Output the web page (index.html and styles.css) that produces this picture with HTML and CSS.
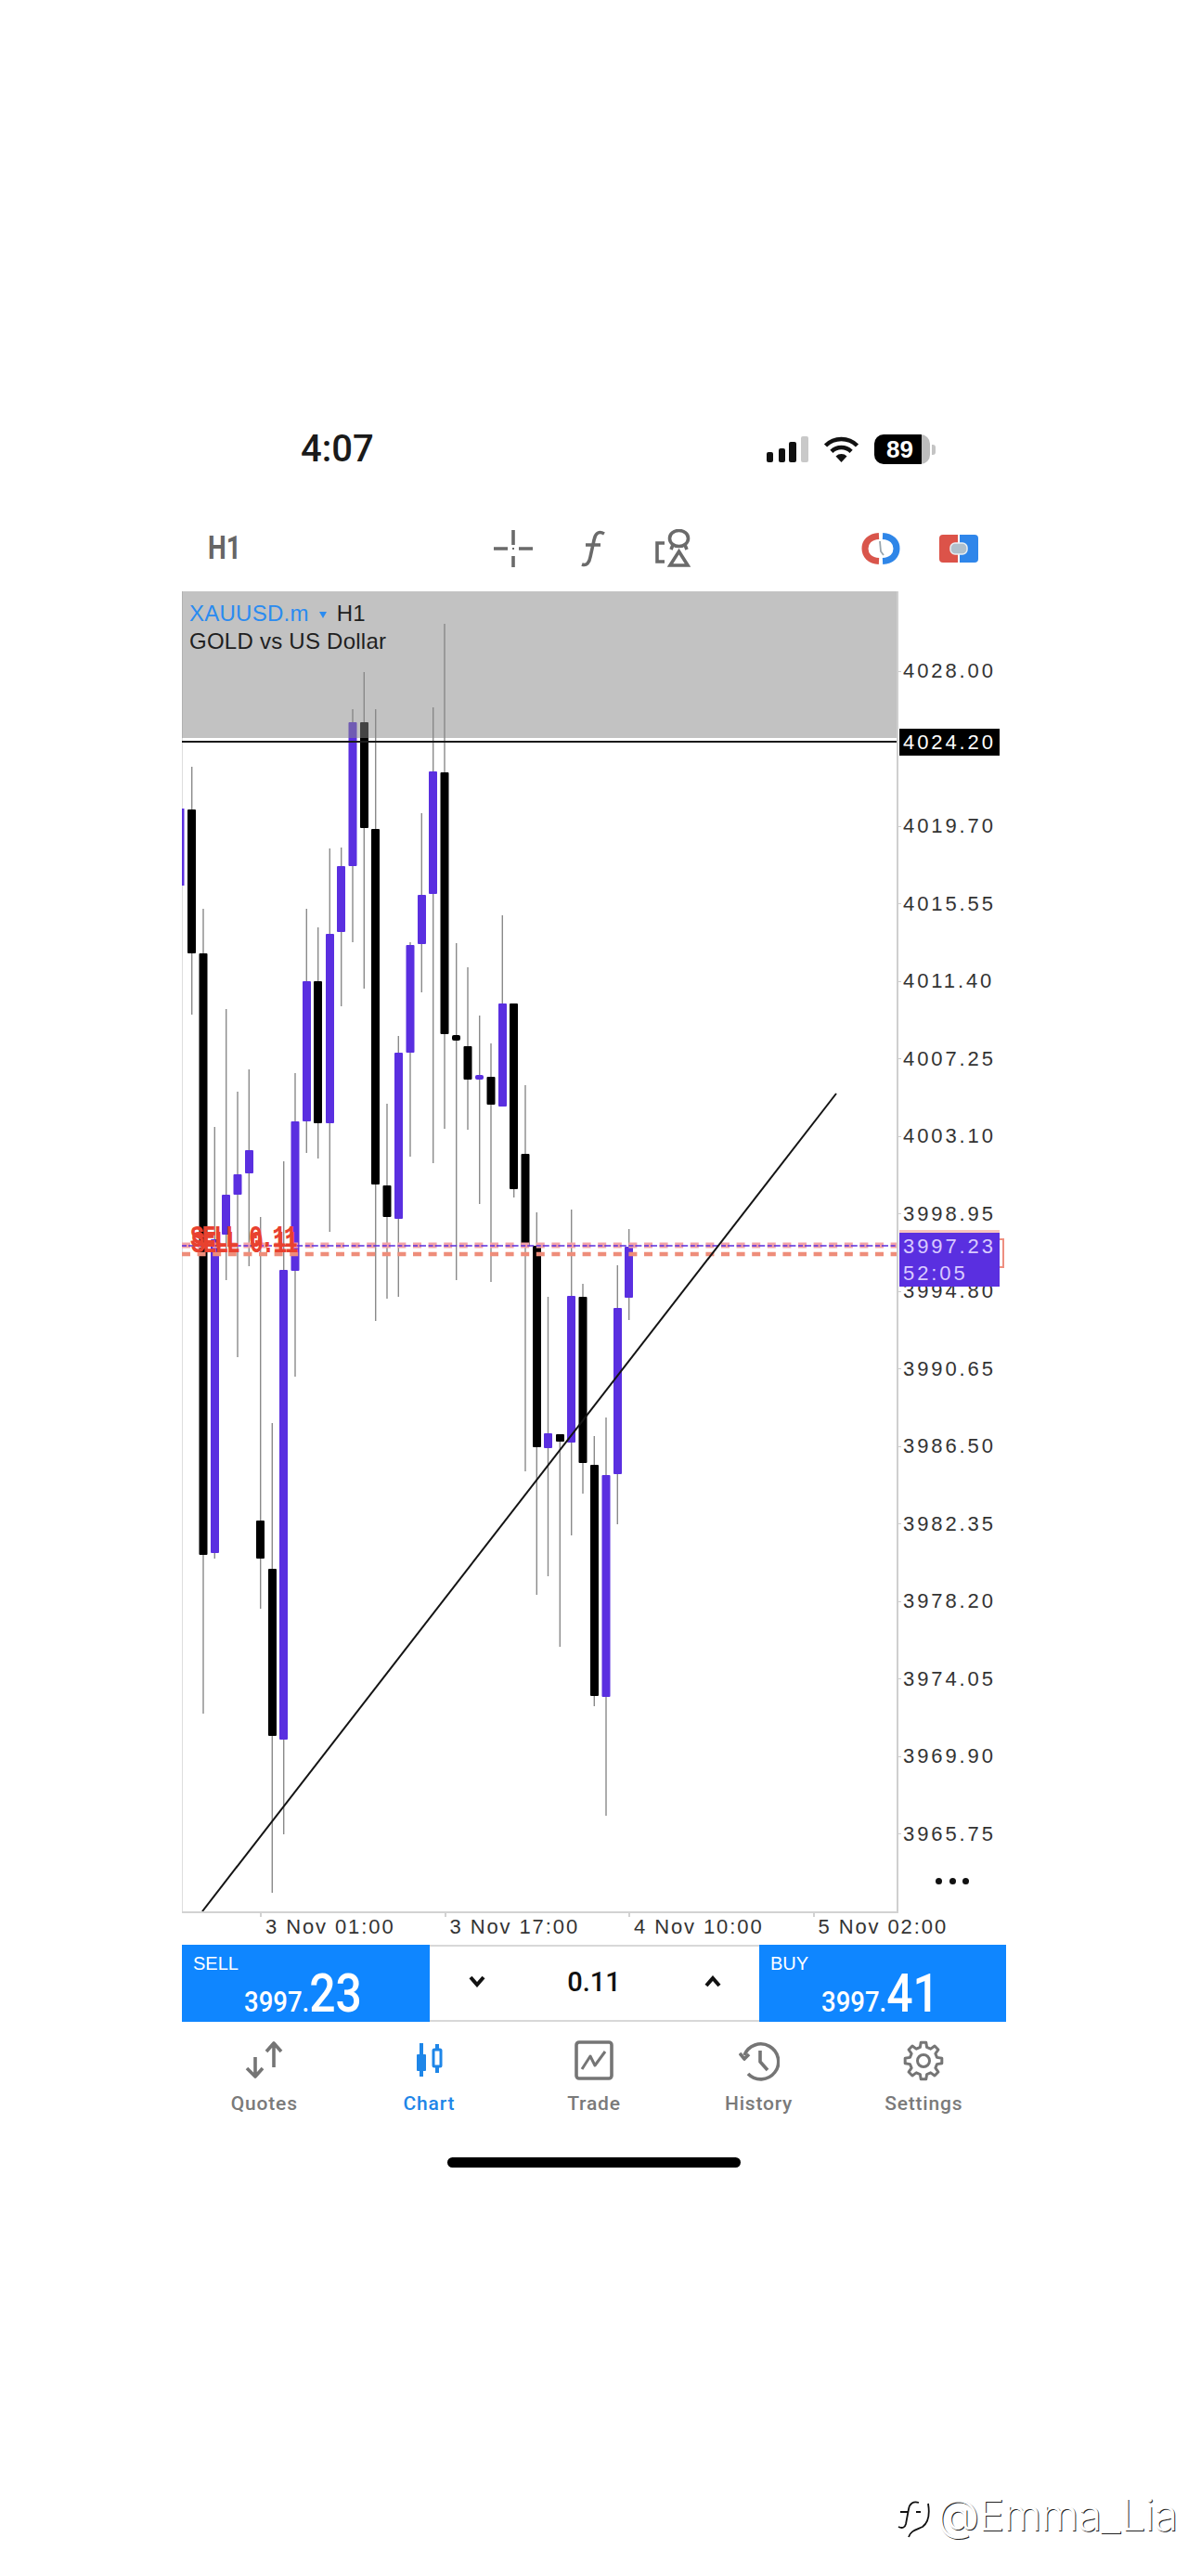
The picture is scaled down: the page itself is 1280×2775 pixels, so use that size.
FILE: index.html
```html
<!DOCTYPE html>
<html lang="en">
<head>
<meta charset="utf-8">
<title>XAUUSD.m H1</title>
<link rel="stylesheet" href="styles.css">
</head>
<body>
<main class="screen">
  <header class="status">
    <span class="time">4:07</span>
    <div class="status-icons">
      <svg class="signal" width="45" height="28" viewBox="0 0 45 28"><rect x="0" y="17" width="7" height="11" rx="2"/><rect x="13" y="13" width="7" height="15" rx="2"/><rect x="24" y="6" width="8" height="22" rx="2"/><rect class="signal-off" x="37" y="0" width="8" height="28" rx="2"/></svg>
      <svg class="wifi" width="41" height="29" viewBox="0 0 41 29"><path class="wifi-arc" d="M3.5 10A24 24 0 0 1 37.500 10"/><path class="wifi-arc" d="M9.900 16.400A15 15 0 0 1 31.100 16.400"/><path d="M14.500 21.500L20.500 28L26.500 21.500A8.500 8.500 0 0 0 14.500 21.500Z"/></svg>
      <div class="battery-wrap"><span class="battery">89</span><span class="battery-tip"></span></div>
    </div>
  </header>

  <nav class="toolbar">
    <span class="period">H1</span>
    <div class="tools">
      <svg width="44" height="42" viewBox="0 0 44 42" class="tool"><path d="M22 1V17M22 29V41M1 21H16M28 21H43"/><path class="tool-thin" d="M22 20V22"/></svg>
      <svg width="44" height="42" viewBox="0 0 44 42" class="tool"><path d="M34 5C27 1 24 6 23 12L19 30C18 36 15 40 10 38M14 17H30"/></svg>
      <svg width="44" height="42" viewBox="0 0 44 42" class="tool"><ellipse cx="28.500" cy="10" rx="10" ry="8.500"/><path d="M22 17L20 22M35 17L37 22M28.500 24L38 39H19ZM13 15H5V35H13"/></svg>
    </div>
    <div class="apps">
      <svg width="42" height="34" viewBox="0 0 42 34"><path class="clock-red" d="M19 3.500C9 4 4 10 4 17S9 30 19 30.500"/><path class="clock-blue" d="M23 3.500C33 4 38 10 38 17S33 30 23 30.500"/><path class="clock-hand" d="M20 9L21 20L24 24"/></svg>
      <svg width="42" height="30" viewBox="0 0 42 30"><path class="split-red" d="M20 0H4Q0 0 0 4V26Q0 30 4 30H20Z"/><path class="split-blue" d="M22 0H38Q42 0 42 4V26Q42 30 38 30H22Z"/><rect class="split-core" x="12" y="9" width="18" height="12" rx="5"/></svg>
    </div>
  </nav>

  <section class="chart">
    <div class="plot">
      <svg class="plot-svg" width="770" height="1422" viewBox="196 637 770 1422">
        <path class="wicks" d="M206.700 826V1093M219 979V1846M231.300 1214V1679M243.700 1087V1379M256 1176V1462M268.300 1152V1364M280.700 1311V1733M293.300 1533V2039M305.700 1251V1976M318 1156V1483M330.300 979V1242M342.700 999V1248M355.300 914V1327M367.700 913V1084M380 764V1015M392.300 724V1065M404.700 764V1423M417 1189V1399M429.300 1116V1397M442 1015V1246M454.300 876V1069M466.700 762V1253M479 672V1216M491.700 1016V1379M504 1042V1217M516.700 1094V1297M529 1124V1381M541.300 986V1192M553.700 1081V1290M566 1169V1585M578.300 1306V1718M590.500 1397V1698M603.300 1545V1774M615.700 1303V1654M628 1383V1609M640.300 1547V1838M653 1527V1956M665.300 1363V1642M677.700 1324V1422"/>
        <g class="up">
          <rect x="196" y="871" width="2.500" height="83"/>
          <rect x="227" y="1335" width="9" height="338" rx="1"/>
          <rect x="239" y="1287" width="9" height="43" rx="1"/>
          <rect x="251.500" y="1265" width="9" height="22" rx="1"/>
          <rect x="264" y="1239" width="9" height="25" rx="1"/>
          <rect x="301" y="1368" width="9" height="506" rx="1"/>
          <rect x="313.500" y="1208" width="9" height="161" rx="1"/>
          <rect x="326" y="1057" width="9" height="151" rx="1"/>
          <rect x="351" y="1006" width="9" height="204" rx="1"/>
          <rect x="363" y="933" width="9" height="71" rx="1"/>
          <rect x="375.500" y="778" width="9" height="155" rx="1"/>
          <rect x="425" y="1134" width="9" height="179" rx="1"/>
          <rect x="437.500" y="1018" width="9" height="116" rx="1"/>
          <rect x="450" y="964" width="9" height="53" rx="1"/>
          <rect x="462" y="831" width="9" height="132" rx="1"/>
          <rect x="512" y="1158" width="9" height="5" rx="2"/>
          <rect x="537" y="1081" width="9" height="111" rx="1"/>
          <rect x="586" y="1544" width="9" height="16" rx="1"/>
          <rect x="611" y="1396" width="9" height="158" rx="1"/>
          <rect x="648.500" y="1589" width="9" height="239" rx="1"/>
          <rect x="661" y="1409" width="9" height="179" rx="1"/>
          <rect x="673" y="1343" width="9" height="55" rx="1"/>
        </g>
        <g class="down">
          <rect x="202" y="872" width="9" height="155" rx="1"/>
          <rect x="214.500" y="1027" width="9" height="648" rx="1"/>
          <rect x="276" y="1638" width="9" height="41" rx="1"/>
          <rect x="289" y="1690" width="9" height="180" rx="1"/>
          <rect x="338" y="1057" width="9" height="153" rx="1"/>
          <rect x="388" y="778" width="9" height="114" rx="1"/>
          <rect x="400" y="893" width="9" height="383" rx="1"/>
          <rect x="412.500" y="1277" width="9" height="34" rx="1"/>
          <rect x="474.500" y="832" width="9" height="282" rx="1"/>
          <rect x="487" y="1115" width="9" height="6" rx="2"/>
          <rect x="499.500" y="1127" width="9" height="36" rx="1"/>
          <rect x="524.500" y="1160" width="9" height="30" rx="1"/>
          <rect x="549" y="1081" width="9" height="200" rx="1"/>
          <rect x="561.500" y="1243" width="9" height="100" rx="1"/>
          <rect x="574" y="1342" width="9" height="217" rx="1"/>
          <rect x="599" y="1545" width="9" height="8" rx="1"/>
          <rect x="623.500" y="1397" width="9" height="179" rx="1"/>
          <rect x="636" y="1578" width="9" height="249" rx="1"/>
        </g>
        <rect class="shade" x="196" y="637" width="770" height="158"/>
        <path class="stop-line" d="M196 799H966"/>
        <path class="ask-dash" d="M196 1341.500H966"/>
        <path class="ask-line" d="M196 1342H966"/>
        <path class="sell-dash" d="M196 1351H966"/>
        <path class="trend" d="M218 2059L901 1178"/>
      </svg>
      <div class="legend">
        <div class="legend-row"><span class="symbol">XAUUSD.m</span><span class="caret"></span><span>H1</span></div>
        <div>GOLD vs US Dollar</div>
      </div>
      <span class="sell-tag">SELL 0.11</span>
    </div>
    <div class="axis">
      <span class="price">4028.00</span>
      <span class="price price-blank"></span>
      <span class="price">4019.70</span>
      <span class="price">4015.55</span>
      <span class="price">4011.40</span>
      <span class="price">4007.25</span>
      <span class="price">4003.10</span>
      <span class="price">3998.95</span>
      <span class="price">3994.80</span>
      <span class="price">3990.65</span>
      <span class="price">3986.50</span>
      <span class="price">3982.35</span>
      <span class="price">3978.20</span>
      <span class="price">3974.05</span>
      <span class="price">3969.90</span>
      <span class="price">3965.75</span>
      <span class="tag tag-stop">4024.20</span>
      <span class="bracket"></span>
      <span class="tag tag-ask">3997.23<br>52:05</span>
      <span class="more"><i></i><i></i><i></i></span>
    </div>
    <div class="times">
      <span class="stamp">3 Nov 01:00</span>
      <span class="stamp">3 Nov 17:00</span>
      <span class="stamp">4 Nov 10:00</span>
      <span class="stamp">5 Nov 02:00</span>
    </div>
  </section>

  <section class="trade">
    <div class="quote">
      <span class="quote-label">SELL</span>
      <span class="quote-price"><span class="quote-small">3997.</span><span class="quote-big">23</span></span>
    </div>
    <div class="volume">
      <svg width="18" height="13" viewBox="0 0 18 13" class="chev"><path d="M2 2L9 10L16 2"/></svg>
      <span class="lot">0.11</span>
      <svg width="18" height="13" viewBox="0 0 18 13" class="chev"><path d="M2 11L9 3L16 11"/></svg>
    </div>
    <div class="quote quote-buy">
      <span class="quote-label">BUY</span>
      <span class="quote-price"><span class="quote-small">3997.</span><span class="quote-big">41</span></span>
    </div>
  </section>

  <nav class="tabs">
    <a class="tab">
      <svg width="44" height="44" viewBox="0 0 44 44" class="ico"><path d="M12 18V38M3 30L12 39L20 30M32 4V29M24 12L32 3L40 12"/></svg>
      <span>Quotes</span>
    </a>
    <a class="tab tab-on">
      <svg width="44" height="44" viewBox="0 0 44 44" class="ico-chart"><path d="M14 3V39M31 4V35"/><rect class="filled" x="9" y="15" width="10" height="18" rx="1"/><rect class="hollow" x="27" y="10" width="8" height="18" rx="1"/></svg>
      <span>Chart</span>
    </a>
    <a class="tab">
      <svg width="44" height="44" viewBox="0 0 44 44" class="ico"><rect x="3" y="2" width="38" height="39" rx="3"/><path class="ico-thin" d="M9 31L18 17L23 27L34 12"/></svg>
      <span>Trade</span>
    </a>
    <a class="tab">
      <svg width="44" height="44" viewBox="0 0 44 44" class="ico"><path d="M6 16A19 19 0 1 1 10 36"/><path d="M1 14L6 20L11 15M23 11V23L31 32"/></svg>
      <span>History</span>
    </a>
    <a class="tab">
      <svg width="44" height="44" viewBox="0 0 44 44" class="ico"><path class="ico-thin" d="M18.370 7.450L19.220 2.190H24.780L25.630 7.450L29.730 9.140L34.040 6.030L37.970 9.960L34.860 14.270L36.550 18.370L41.810 19.220V24.780L36.550 25.630L34.860 29.730L37.970 34.040L34.040 37.970L29.730 34.860L25.630 36.550L24.780 41.810H19.220L18.370 36.550L14.270 34.860L9.960 37.970L6.030 34.040L9.140 29.730L7.450 25.630L2.190 24.780V19.220L7.450 18.370L9.140 14.270L6.030 9.960L9.960 6.030L14.270 9.140Z"/><circle class="ico-thin" cx="22" cy="22" r="6.500"/></svg>
      <span>Settings</span>
    </a>
  </nav>

  <div class="home-bar"></div>
</main>

<div class="watermark">
  <svg width="40" height="44" viewBox="0 0 40 44" class="wm-logo"><path d="M36 6C38 18 37 26 30 31C24 34 17 35 15 42"/><path d="M26 5C20 3 16 6 15 12L12 28C11 32 8 33 4 31M6 15H14M23 15H28"/></svg>
  <span class="wm-text">@Emma_Lia</span>
</div>
</body>
</html>
```

FILE: styles.css
```css
* { box-sizing: border-box; }
html, body { margin: 0; padding: 0; background: #fff; }
body {
  position: relative;
  height: 2775px;
  overflow: hidden;
  font-family: "Liberation Sans", Arial, sans-serif;
  color: #333;
}
.screen { width: 888px; margin-left: 196px; padding-top: 467px; }

/* status bar */
.status { display: flex; align-items: center; height: 34px; padding: 0 76px 0 128px; }
.time { font-family: "Roboto", sans-serif; font-weight: 500; font-size: 40px; line-height: 34px; color: #1a1a1a; }
.status-icons { display: flex; align-items: center; gap: 15px; margin-left: auto; }
.signal { fill: #111; display: block; }
.signal-off { fill: #c9c9c9; }
.wifi { display: block; fill: #111; }
.wifi-arc { fill: none; stroke: #111; stroke-width: 4.5; }
.battery-wrap { display: flex; align-items: center; gap: 2px; }
.battery {
  width: 60px; height: 32px; border-radius: 10px;
  background: linear-gradient(90deg, #000 85%, #bdbdbd 85%);
  color: #fff; font-weight: 700; font-size: 26px; line-height: 32px;
  padding-left: 13px;
}
.battery-tip { width: 4px; height: 11px; background: #c4c4c4; border-radius: 0 3px 3px 0; }

/* toolbar */
.toolbar {
  display: grid; grid-template-columns: 1fr auto 1fr; align-items: center;
  height: 42px; margin-top: 69px; padding: 0 30px 0 28px;
}
.period {
  font-family: "Roboto", sans-serif; font-weight: 700; font-size: 35px; line-height: 42px; color: #666;
  transform: scaleX(.8); transform-origin: left center;
}
.tools { display: flex; gap: 42px; }
.tool { display: block; fill: none; stroke: #6a6a6a; stroke-width: 3.6; }
.tool-thin { stroke-width: 2; }
.apps { display: flex; align-items: center; justify-content: flex-end; gap: 42px; }
.clock-red { fill: none; stroke: #d9554b; stroke-width: 7; }
.clock-blue { fill: none; stroke: #2f86e8; stroke-width: 7; }
.clock-hand { fill: none; stroke: #98a5ad; stroke-width: 1.8; }
.split-red { fill: #dc5349; }
.split-blue { fill: #2f86ea; }
.split-core { fill: #b0c0cc; stroke: #e8eef3; stroke-width: 1.500; }

/* chart */
.chart {
  display: grid; grid-template-columns: 770px 118px; grid-template-rows: 1422px 36px;
  margin-top: 25px;
}
.plot { position: relative; }
.plot-svg { display: block; background: linear-gradient(#ddd, #ddd) left top / 1px 100% no-repeat; }
.wicks { fill: none; stroke: #8a8a8a; stroke-width: 1.4; }
.up { fill: #5a2fe0; }
.down { fill: #000; }
.shade { fill: rgba(134, 134, 134, .506); }
.stop-line { stroke: #1a1a1a; stroke-width: 2; fill: none; }
.ask-line { stroke: #5a2fe0; stroke-width: 1.6; stroke-dasharray: 5 2 7 2.600; fill: none; }
.ask-dash { stroke: #f3a3a8; stroke-width: 6; stroke-dasharray: 9 7.600; fill: none; }
.sell-dash { stroke: #ee8d7a; stroke-width: 4.500; stroke-dasharray: 9 7.600; fill: none; }
.trend { stroke: #141414; stroke-width: 2; fill: none; }
.legend {
  position: absolute; left: 8px; top: 9px;
  font-size: 24px; line-height: 30px; letter-spacing: .25px; color: #1f1f1f;
}
.legend-row { display: flex; align-items: center; }
.symbol { color: #2a8bf0; }
.caret {
  width: 0; height: 0; margin: 3px 11px 0 11px;
  border-left: 4.500px solid transparent; border-right: 4.500px solid transparent; border-top: 7px solid #2a8bf0;
}
.sell-tag {
  position: absolute; left: 9px; top: 680px;
  font-family: "Liberation Mono", monospace; font-weight: 700; font-size: 25px; line-height: 26px;
  letter-spacing: -2.400px; white-space: pre;
  color: #e8412f; text-shadow: 1px 5px 0 #e8412f;
  transform: scaleY(1.35); transform-origin: left top;
}

/* price axis */
.axis {
  position: relative;
  display: flex; flex-direction: column;
  border-left: 2px solid #cfcfcf; padding-top: 44.250px;
}
.price {
  height: 83.500px; line-height: 83.500px; padding-left: 5px; flex: none;
  font-size: 22px; letter-spacing: 2.900px; color: #333;
  background: linear-gradient(#ccc, #ccc) left center / 3px 1px no-repeat;
}
.price-blank { background: none; }
.tag {
  position: absolute; left: 1px; width: 108px; padding-left: 4px;
  font-size: 22px; letter-spacing: 2.900px; line-height: 29px;
}
.tag-stop { top: 148px; height: 29px; background: #000; color: #fff; }
.tag-ask { top: 691px; height: 58px; background: #5a2fe0; color: #d9caff; box-shadow: 0 -3px 0 #f6c3bd; }
.bracket {
  position: absolute; left: 100px; top: 697px; width: 14px; height: 32px;
  border: 2px solid #ee8f80; border-left: 0;
}
.more { position: absolute; left: 40px; top: 1386px; display: flex; gap: 7.500px; }
.more i { width: 7px; height: 7px; border-radius: 50%; background: #111; }

/* time axis */
.times {
  grid-column: 1 / -1; display: flex; padding-left: 84px;
  background: linear-gradient(#d2d2d2, #d2d2d2) left top / 772px 2px no-repeat;
}
.stamp {
  flex: 0 0 198.500px; padding-left: 6px;
  font-size: 22px; letter-spacing: 1.900px; line-height: 34px; color: #333; white-space: nowrap;
  background: linear-gradient(#d2d2d2, #d2d2d2) left top / 2px 6px no-repeat;
}

/* trade row */
.trade {
  display: grid; grid-template-columns: 267px 1fr 266px; grid-template-rows: 79px; height: 83px;
  border-top: 2px solid #d8d8d8; border-bottom: 2px solid #d8d8d8;
}
.quote {
  display: flex; flex-direction: column; height: 83px; margin: -2px 0;
  background: #0f86ff; color: #fff; padding: 10px 0 0 12px;
}
.quote-label { font-size: 20px; line-height: 20px; }
.quote-price {
  display: block; margin: -2px 0 0 55px; white-space: nowrap; line-height: 48px;
  font-family: "Roboto", sans-serif; font-weight: 500;
  transform: scaleX(.86); transform-origin: left center;
}
.quote-small { font-size: 32px; }
.quote-big { font-size: 58px; }
.volume {
  display: flex; align-items: center; justify-content: space-between;
  padding: 0 41px 4px 42px; color: #111;
}
.lot { font-family: "Roboto", sans-serif; font-weight: 500; font-size: 29px; margin-right: 2px; }
.chev { display: block; fill: none; stroke: #111; stroke-width: 4; }

/* tabs */
.tabs { display: grid; grid-template-columns: repeat(5, 1fr); padding-top: 20px; }
.tab {
  display: flex; flex-direction: column; align-items: center; gap: 12px;
  font-family: "Roboto", sans-serif; font-weight: 500;
  font-size: 21px; line-height: 24px; letter-spacing: .8px; color: #7a7a7a;
}
.tab-on { color: #1e86e8; }
.ico { display: block; fill: none; stroke: #757575; stroke-width: 3.6; stroke-linejoin: round; }
.ico-thin { stroke-width: 3; }
.ico-chart { display: block; fill: none; stroke: #1e86e8; stroke-width: 4; }
.filled { fill: #1e86e8; stroke-width: 0; }
.hollow { fill: #fff; stroke-width: 3; }

.home-bar { width: 316px; height: 11px; margin: 46px 0 0 286px; border-radius: 6px; background: #000; }

/* watermark */
.watermark {
  position: absolute; right: 12px; top: 2682px;
  display: flex; align-items: center; gap: 6px;
}
.wm-logo { display: block; margin-top: 8px; fill: none; stroke: #111; stroke-width: 1.800; }
.wm-text {
  font-family: "Inter", sans-serif; font-weight: 300; font-size: 47px; line-height: 54px; letter-spacing: -1px;
  color: #fff; text-shadow: 1px 1px 0 #222;
}
```
